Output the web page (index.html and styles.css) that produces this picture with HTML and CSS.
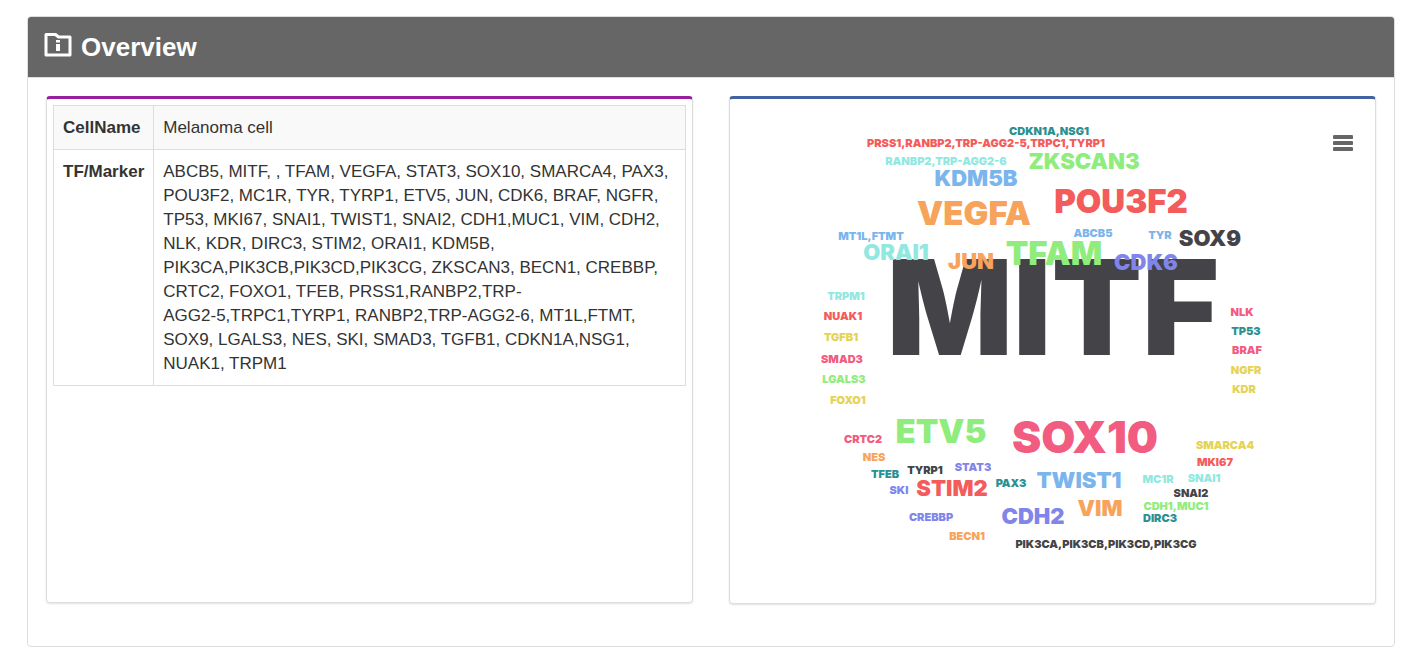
FILE: index.html
```html
<!DOCTYPE html>
<html lang="en">
<head>
<meta charset="utf-8">
<title>Overview</title>
<link rel="stylesheet" href="styles.css">
</head>
<body>
<section class="panel">
  <header class="panel-header">
    <svg class="panel-icon" viewBox="0 0 28 26" aria-hidden="true">
      <path class="folder" d="M2 2.500H11.500L14.500 5H26V23H2Z"/>
      <path class="info" d="M12 8H16V10.500H12ZM12 12H16V19H12Z"/>
    </svg>
    <h1 class="panel-title">Overview</h1>
  </header>
  <div class="panel-body">
    <article class="card card-details">
      <table class="details">
        <tr><th scope="row">CellName</th><td>Melanoma cell</td></tr>
        <tr><th scope="row">TF/Marker</th><td>ABCB5, MITF, , TFAM, VEGFA, STAT3, SOX10, SMARCA4, PAX3, POU3F2, MC1R, TYR, TYRP1, ETV5, JUN, CDK6, BRAF, NGFR, TP53, MKI67, SNAI1, TWIST1, SNAI2, CDH1,MUC1, VIM, CDH2, NLK, KDR, DIRC3, STIM2, ORAI1, KDM5B, PIK3CA,PIK3CB,PIK3CD,PIK3CG, ZKSCAN3, BECN1, CREBBP, CRTC2, FOXO1, TFEB, PRSS1,RANBP2,TRP-<span class="term">AGG2-5,TRPC1,TYRP1,</span> RANBP2,TRP-AGG2-6, MT1L,FTMT, SOX9, LGALS3, NES, SKI, SMAD3, TGFB1, CDKN1A,NSG1, NUAK1, TRPM1</td></tr>
      </table>
    </article>
    <article class="card card-chart">
      <svg class="cloud" viewBox="0 0 645 504" role="img" aria-label="Word cloud of markers">
        <text class="dark xl" x="323" y="256">MITF</text>
        <text class="pink lg" x="355" y="354">SOX10</text>
        <text class="red md" x="391" y="114">POU3F2</text>
        <text class="orange md" x="244" y="126">VEGFA</text>
        <text class="green md" x="324" y="166">TFAM</text>
        <text class="green md" x="211" y="344">ETV5</text>
        <text class="green sm" x="354" y="70">ZKSCAN3</text>
        <text class="blue sm" x="246" y="87">KDM5B</text>
        <text class="aqua sm" x="166" y="161">ORAI1</text>
        <text class="orange sm" x="241" y="170">JUN</text>
        <text class="dark sm" x="480" y="147">SOX9</text>
        <text class="violet sm" x="416" y="171">CDK6</text>
        <text class="red sm" x="222" y="397">STIM2</text>
        <text class="blue sm" x="349" y="389">TWIST1</text>
        <text class="orange sm" x="370" y="417">VIM</text>
        <text class="violet sm" x="303" y="425">CDH2</text>
        <text class="teal xs" x="319" y="36">CDKN1A,NSG1</text>
        <text class="red xs" x="256" y="48">PRSS1,RANBP2,TRP-AGG2-5,TRPC1,TYRP1</text>
        <text class="aqua xs" x="216" y="66">RANBP2,TRP-AGG2-6</text>
        <text class="blue xs" x="141" y="141">MT1L,FTMT</text>
        <text class="blue xs" x="363" y="138">ABCB5</text>
        <text class="blue xs" x="430" y="140">TYR</text>
        <text class="aqua xs" x="116" y="201">TRPM1</text>
        <text class="red xs" x="113" y="221">NUAK1</text>
        <text class="yellow xs" x="111" y="242">TGFB1</text>
        <text class="pink xs" x="112" y="264">SMAD3</text>
        <text class="green xs" x="114" y="284">LGALS3</text>
        <text class="yellow xs" x="118" y="305">FOXO1</text>
        <text class="pink xs" x="512" y="217">NLK</text>
        <text class="teal xs" x="516" y="236">TP53</text>
        <text class="pink xs" x="517" y="255">BRAF</text>
        <text class="yellow xs" x="516" y="275">NGFR</text>
        <text class="yellow xs" x="514" y="294">KDR</text>
        <text class="pink xs" x="133" y="344">CRTC2</text>
        <text class="orange xs" x="144" y="362">NES</text>
        <text class="teal xs" x="155" y="379">TFEB</text>
        <text class="dark xs" x="195" y="375">TYRP1</text>
        <text class="violet xs" x="243" y="372">STAT3</text>
        <text class="violet xs" x="169" y="395">SKI</text>
        <text class="teal xs" x="281" y="388">PAX3</text>
        <text class="violet xs" x="201" y="422">CREBBP</text>
        <text class="orange xs" x="237" y="441">BECN1</text>
        <text class="dark xs" x="376" y="449">PIK3CA,PIK3CB,PIK3CD,PIK3CG</text>
        <text class="aqua xs" x="428" y="384">MC1R</text>
        <text class="aqua xs" x="474" y="383">SNAI1</text>
        <text class="dark xs" x="461" y="398">SNAI2</text>
        <text class="green xs" x="446" y="411">CDH1,MUC1</text>
        <text class="teal xs" x="430" y="423">DIRC3</text>
        <text class="yellow xs" x="495" y="350">SMARCA4</text>
        <text class="red xs" x="485" y="367">MKI67</text>
      </svg>
      <button class="menu" type="button" aria-label="Chart menu">
        <svg viewBox="0 0 20 16" aria-hidden="true"><path d="M1.500 2H18.500M1.500 8H18.500M1.500 14H18.500"/></svg>
      </button>
    </article>
  </div>
</section>
</body>
</html>
```
FILE: styles.css
```css
* { box-sizing: border-box; }

body {
  margin: 16px 10px 16px 27px;
  background: #fff;
  color: #333;
  font: 17px/24px "Liberation Sans", Arial, sans-serif;
}

.panel {
  border: 1px solid #ddd;
  border-radius: 4px;
  overflow: hidden;
}

.panel-header {
  display: flex;
  align-items: center;
  gap: 9px;
  padding: 15px 16px;
  border-bottom: 1px solid #ddd;
  background: #666;
  color: #fff;
}

.panel-icon {
  width: 28px;
  height: 26px;
  margin-bottom: 4px;
}

.folder {
  fill: none;
  stroke: #fff;
  stroke-width: 3;
  stroke-linejoin: round;
}

.info { fill: #fff; }

.panel-title {
  margin: 0;
  font-size: 26px;
  line-height: 30px;
}

.panel-body {
  display: grid;
  grid-template-columns: 1fr 1fr;
  align-items: start;
  gap: 36px;
  padding: 18px 18px 42px;
}

.card {
  border: 1px solid #ddd;
  border-top: 3px solid #991f9e;
  border-radius: 4px;
  box-shadow: 0 1px 2px rgba(0, 0, 0, 0.12);
}

.card-details {
  min-height: 507px;
  padding: 6px;
}

.card-chart {
  position: relative;
  border-top-color: #4362a1;
}

.details {
  width: 100%;
  border-collapse: collapse;
}

.details th,
.details td {
  padding: 10px 9px 9px;
  border: 1px solid #ddd;
  text-align: left;
  vertical-align: top;
}

.details th { width: 100px; text-align: center; }
.details tr:first-child { background: #f9f9f9; }
.details tr:first-child th { text-align: left; }
.term { white-space: nowrap; }

.cloud {
  display: block;
  width: 100%;
  height: auto;
  font-family: Inter, "Liberation Sans", sans-serif;
  font-weight: 900;
  text-anchor: middle;
}

.xl { font-size: 132px; }
.lg { font-size: 44px; }
.md { font-size: 33px; }
.sm { font-size: 22px; }
.xs { font-size: 11px; }

.blue { fill: #7cb5ec; }
.dark { fill: #434348; }
.green { fill: #90ed7d; }
.orange { fill: #f7a35c; }
.violet { fill: #8085e9; }
.pink { fill: #f15c80; }
.yellow { fill: #e4d354; }
.teal { fill: #2b908f; }
.red { fill: #f45b5b; }
.aqua { fill: #91e8e1; }

.menu {
  position: absolute;
  top: 30px;
  right: 16px;
  display: flex;
  padding: 6px;
  border: 0;
  background: transparent;
  cursor: pointer;
}

.menu svg { width: 20px; height: 16px; }
.menu path { stroke: #666; stroke-width: 4; stroke-linecap: round; }
```
